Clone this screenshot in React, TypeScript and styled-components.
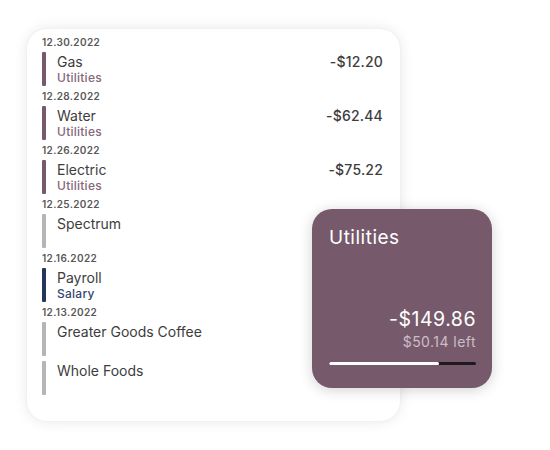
import React from 'react'
import styled, { createGlobalStyle } from 'styled-components'

const COLORS = {
  utilities: '#765a6c',
  utilitiesText: '#86677b',
  salary: '#243659',
  salaryText: '#34476f',
  none: '#b5b5b5',
  text: '#3d3d3d',
  date: '#585858',
}

const GlobalStyle = createGlobalStyle`
  body {
    margin: 0;
    background: #ffffff;
    font-family: Inter, "Noto Sans", "Liberation Sans", sans-serif;
  }
`

const Stage = styled.div`
  position: relative;
  width: 550px;
  height: 450px;
  padding: 29px 0 0 27px;
  box-sizing: border-box;
`

const ListCard = styled.div`
  width: 373px;
  height: 392px;
  box-sizing: border-box;
  padding: 8px 17px 0 15px;
  background: #ffffff;
  border-radius: 20px;
  box-shadow: 0 0 14px rgba(0, 0, 0, 0.1), 0 0 2px rgba(0, 0, 0, 0.05);
  display: flex;
  flex-direction: column;
`

const Group = styled.div`
  display: flex;
  flex-direction: column;
`

const DateLabel = styled.div`
  font-size: 10px;
  font-weight: 600;
  letter-spacing: 0.35px;
  color: ${COLORS.date};
  line-height: 11px;
  margin-bottom: 4px;
`

const Row = styled.div`
  display: flex;
  align-items: flex-start;
  height: 34px;
  margin-bottom: 5px;
`

const Bar = styled.div<{ $color: string }>`
  width: 4px;
  height: 34px;
  border-radius: 1px;
  background: ${(p) => p.$color};
  flex-shrink: 0;
`

const Info = styled.div`
  flex: 1;
  padding-left: 11px;
  display: flex;
  flex-direction: column;
  padding-top: 1px;
`

const Name = styled.div`
  font-size: 14px;
  color: ${COLORS.text};
  line-height: 17px;
`

const Category = styled.div<{ $color: string }>`
  font-size: 12px;
  font-weight: 500;
  letter-spacing: 0.25px;
  color: ${(p) => p.$color};
  line-height: 15px;
`

const Amount = styled.div`
  font-size: 14px;
  font-weight: 500;
  letter-spacing: 0.2px;
  color: ${COLORS.text};
  line-height: 17px;
  padding-top: 1px;
`

const BudgetCard = styled.div`
  position: absolute;
  left: 312px;
  top: 209px;
  width: 180px;
  height: 179px;
  box-sizing: border-box;
  padding: 18px 16px 0 17px;
  border-radius: 20px;
  background: ${COLORS.utilities};
  box-shadow: 0 2px 14px rgba(0, 0, 0, 0.18);
  display: flex;
  flex-direction: column;
  color: #ffffff;
`

const BudgetTitle = styled.div`
  font-size: 19px;
  letter-spacing: 0.5px;
  line-height: 22px;
`

const BudgetTotal = styled.div`
  margin-top: 58px;
  text-align: right;
  font-size: 19.5px;
  letter-spacing: 0.5px;
  line-height: 24px;
`

const BudgetLeft = styled.div`
  margin-top: 2px;
  text-align: right;
  font-size: 14px;
  letter-spacing: 0.45px;
  line-height: 17px;
  color: #cdbcc7;
`

const Track = styled.div`
  margin-top: 12px;
  height: 3px;
  border-radius: 2px;
  background: #1f1a1e;
  overflow: hidden;
`

const Fill = styled.div`
  height: 100%;
  background: #ffffff;
  border-radius: 2px;
`

type Tx = {
  date?: string
  name: string
  category?: string
  amount?: string
  color: string
  textColor?: string
}

const transactions: Tx[] = [
  { date: '12.30.2022', name: 'Gas', category: 'Utilities', amount: '-$12.20', color: COLORS.utilities, textColor: COLORS.utilitiesText },
  { date: '12.28.2022', name: 'Water', category: 'Utilities', amount: '-$62.44', color: COLORS.utilities, textColor: COLORS.utilitiesText },
  { date: '12.26.2022', name: 'Electric', category: 'Utilities', amount: '-$75.22', color: COLORS.utilities, textColor: COLORS.utilitiesText },
  { date: '12.25.2022', name: 'Spectrum', color: COLORS.none },
  { date: '12.16.2022', name: 'Payroll', category: 'Salary', color: COLORS.salary, textColor: COLORS.salaryText },
  { date: '12.13.2022', name: 'Greater Goods Coffee', color: COLORS.none },
  { name: 'Whole Foods', color: COLORS.none },
]

const spent = 149.86
const budget = 200

const App = () => {
  return (
    <React.Fragment>
      <GlobalStyle />
      <Stage>
        <ListCard>
          {transactions.map((tx, i) => (
            <Group key={i}>
              {tx.date && <DateLabel>{tx.date}</DateLabel>}
              <Row>
                <Bar $color={tx.color} />
                <Info>
                  <Name>{tx.name}</Name>
                  {tx.category && (
                    <Category $color={tx.textColor ?? tx.color}>{tx.category}</Category>
                  )}
                </Info>
                {tx.amount && <Amount>{tx.amount}</Amount>}
              </Row>
            </Group>
          ))}
        </ListCard>
        <BudgetCard>
          <BudgetTitle>Utilities</BudgetTitle>
          <BudgetTotal>-${spent.toFixed(2)}</BudgetTotal>
          <BudgetLeft>${(budget - spent).toFixed(2)} left</BudgetLeft>
          <Track>
            <Fill style={{ width: `${(spent / budget) * 100}%` }} />
          </Track>
        </BudgetCard>
      </Stage>
    </React.Fragment>
  )
}

export default App
